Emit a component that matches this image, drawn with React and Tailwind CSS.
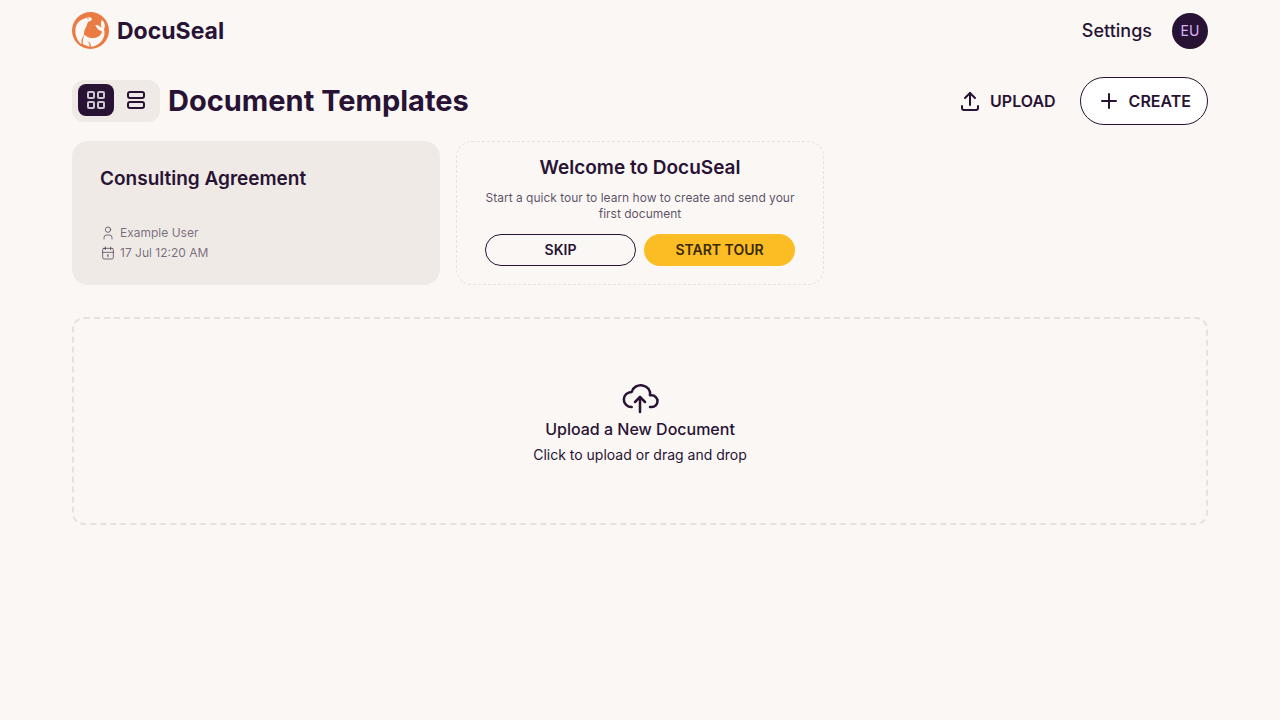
import React from "react";

const Icon = ({ className, stroke = 2, children }) => (
  <svg
    className={className}
    viewBox="0 0 24 24"
    fill="none"
    stroke="currentColor"
    strokeWidth={stroke}
    strokeLinecap="round"
    strokeLinejoin="round"
    aria-hidden="true"
  >
    {children}
  </svg>
);

const Logo = () => (
  <svg className="size-[38px]" viewBox="0 0 114 114" aria-hidden="true">
    <circle cx="55.5" cy="55.5" r="55.5" fill="#e97b43" />
    <path
      fill="#fbf7f4"
      d="M60 21C58 15 49 14 42 18C22 23 10 37 10 56C10 73 17 88 29 97C27 86 30 76 36 70C35 62 37 54 41 47C46 40 45 32 49 29C53 27 59 27 60 21Z"
    />
    <path
      fill="#fbf7f4"
      d="M33 97C31 86 33 76 38 68C47 78 65 81 77 75C86 71 91 64 89 57C81 57 74 50 70 39C78 38 86 43 89 48C86 39 86 29 90 23C99 32 101 43 96 52C101 67 94 84 83 93C75 100 66 104 57 104C57 96 53 90 45 88C51 93 54 98 52 104C45 102 39 100 33 97Z"
    />
    <circle cx="48" cy="20" r="2" fill="#e97b43" />
  </svg>
);

const Navbar = () => (
  <header className="flex items-center justify-between h-[62px]">
    <a href="#" className="flex items-center gap-[7px]">
      <Logo />
      <span className="text-[23px] leading-8 font-bold">DocuSeal</span>
    </a>
    <div className="flex items-center gap-5">
      <a href="#" className="text-lg font-medium">
        Settings
      </a>
      <button className="size-9 rounded-full bg-[#291334] text-[#d8b4fe] text-sm">
        EU
      </button>
    </div>
  </header>
);

const Toolbar = () => (
  <div className="flex items-center justify-between mt-[15px]">
    <div className="flex items-center gap-2">
      <div className="flex items-center gap-1 h-[42px] px-1.5 pb-0.5 rounded-xl bg-[#efeae6]">
        <button
          aria-label="Grid view"
          className="flex items-center justify-center w-9 h-8 rounded-lg bg-[#291334] text-[#cbc6cf]"
        >
          <Icon className="size-6">
            <rect x="4" y="4" width="6" height="6" rx="1" />
            <rect x="14" y="4" width="6" height="6" rx="1" />
            <rect x="4" y="14" width="6" height="6" rx="1" />
            <rect x="14" y="14" width="6" height="6" rx="1" />
          </Icon>
        </button>
        <button
          aria-label="List view"
          className="flex items-center justify-center w-9 h-8 rounded-lg"
        >
          <Icon className="size-6">
            <rect x="4" y="4" width="16" height="6" rx="2" />
            <rect x="4" y="14" width="16" height="6" rx="2" />
          </Icon>
        </button>
      </div>
      <h1 className="text-[29px] leading-9 font-bold">Document Templates</h1>
    </div>
    <div className="flex items-center gap-2">
      <button className="flex items-center gap-2 h-12 px-4 font-semibold">
        <Icon className="size-6">
          <path d="M4 17v2a2 2 0 0 0 2 2h12a2 2 0 0 0 2 -2v-2" />
          <path d="M7 9l5 -5l5 5" />
          <path d="M12 4v12" />
        </Icon>
        UPLOAD
      </button>
      <button className="flex items-center gap-2 h-12 px-4 rounded-full border border-[#291334] bg-white font-semibold">
        <Icon className="size-6">
          <path d="M12 5v14" />
          <path d="M5 12h14" />
        </Icon>
        CREATE
      </button>
    </div>
  </div>
);

const TemplateCard = () => (
  <a
    href="#"
    className="flex flex-col justify-between h-36 px-7 pt-6 pb-[22px] rounded-2xl bg-[#efeae6]"
  >
    <h2 className="text-[19px] leading-7 font-semibold">Consulting Agreement</h2>
    <div className="text-xs leading-5 text-[#291334]/60">
      <p className="flex items-center gap-1">
        <Icon className="size-4" stroke={1.5}>
          <circle cx="12" cy="7" r="4" />
          <path d="M6 21v-2a4 4 0 0 1 4 -4h4a4 4 0 0 1 4 4v2" />
        </Icon>
        Example User
      </p>
      <p className="flex items-center gap-1">
        <Icon className="size-4" stroke={1.5}>
          <rect x="4" y="5" width="16" height="16" rx="2" />
          <path d="M16 3v4" />
          <path d="M8 3v4" />
          <path d="M4 11h16" />
          <path d="M11 15h1" />
          <path d="M12 15v3" />
        </Icon>
        17 Jul 12:20 AM
      </p>
    </div>
  </a>
);

const WelcomeCard = () => (
  <div className="h-36 px-7 pt-3 rounded-2xl border border-dashed border-[#e7e2df] text-center">
    <h2 className="text-[19px] leading-7 font-semibold">Welcome to DocuSeal</h2>
    <p className="mt-2 text-xs leading-4 text-[#291334]/75">
      Start a quick tour to learn how to create and send your first document
    </p>
    <div className="grid grid-cols-2 gap-2 mt-3">
      <button className="h-8 rounded-full border border-[#291334] text-sm font-semibold">
        SKIP
      </button>
      <button className="h-8 rounded-full bg-[#fbbd23] text-[#382800] text-sm font-semibold">
        START TOUR
      </button>
    </div>
  </div>
);

const Dropzone = () => (
  <button className="flex flex-col items-center justify-center w-full h-52 mt-8 rounded-xl border-2 border-dashed border-[#e7e2df]">
    <Icon className="size-10" stroke={1.5}>
      <path d="M7 18a4.6 4.4 0 0 1 0 -9a5 4.5 0 0 1 11 2h1a3.5 3.5 0 0 1 0 7h-1" />
      <path d="M9 15l3 -3l3 3" />
      <path d="M12 12v9" />
    </Icon>
    <span className="font-medium">Upload a New Document</span>
    <span className="mt-1 text-sm">Click to upload or drag and drop</span>
  </button>
);

export default function App() {
  return (
    <div className="min-h-screen bg-[#faf7f4] text-[#291334] font-['Inter',sans-serif]">
      <div className="max-w-[1184px] mx-auto px-6">
        <Navbar />
        <main>
          <Toolbar />
          <div className="grid grid-cols-3 gap-4 mt-4">
            <TemplateCard />
            <WelcomeCard />
          </div>
          <Dropzone />
        </main>
      </div>
    </div>
  );
}
